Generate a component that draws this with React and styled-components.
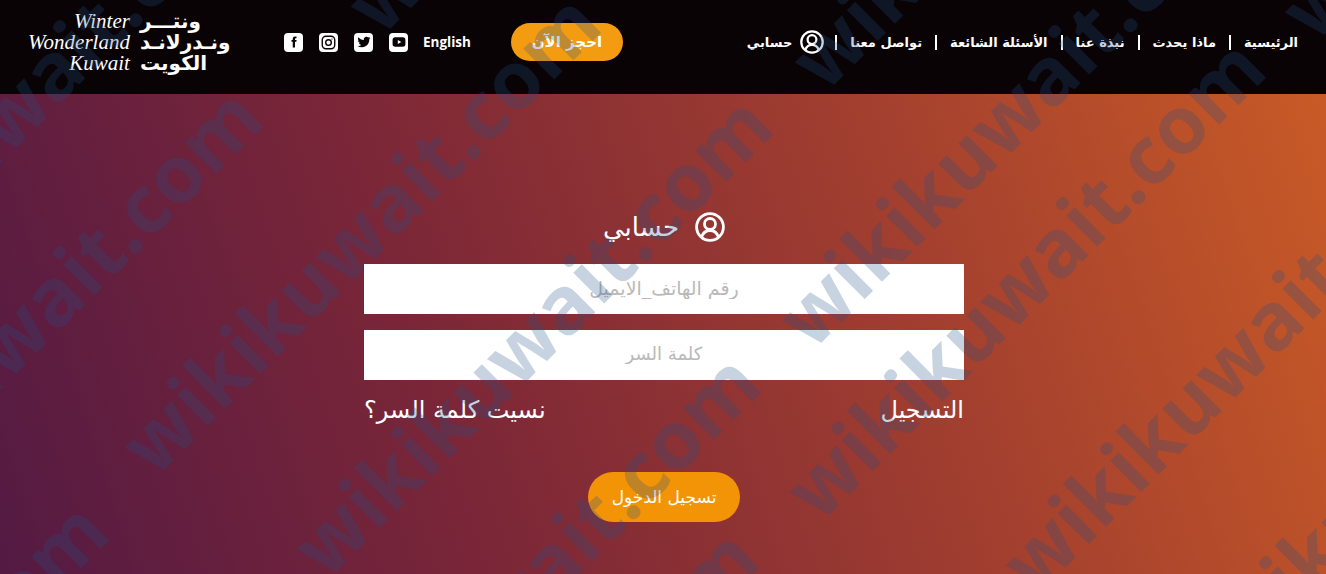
import React from 'react';
import styled, { createGlobalStyle } from 'styled-components';

const Global = createGlobalStyle`
  html, body { margin: 0; padding: 0; }
  body { font-family: "DejaVu Sans", "Noto Sans", sans-serif; }
`;

const Page = styled.div`
  position: relative;
  width: 1326px;
  height: 574px;
  overflow: hidden;
  background: linear-gradient(72deg, #541a43 0%, #7a2638 32%, #a13e2f 66%, #cb5c26 100%);
`;

const Header = styled.header`
  height: 94px;
  box-sizing: border-box;
  background: #0a0305;
  display: flex;
  align-items: center;
  padding: 0 28px 10px;
  justify-content: space-between;
`;

const LeftGroup = styled.div`
  display: flex;
  align-items: center;
`;

const Logo = styled.div`
  width: 202px;
  display: flex;
  align-items: center;
  gap: 5px;
  color: #fff;
`;

const LogoEn = styled.div`
  font-family: "Liberation Serif", serif;
  font-style: italic;
  font-size: 21px;
  line-height: 21px;
  text-align: right;
  width: 102px;
`;

const LogoBar = styled.div`
  width: 1px;
  height: 62px;
  background: #bbb;
`;

const LogoAr = styled.div`
  font-size: 20px;
  font-weight: 700;
  line-height: 21px;
  direction: rtl;
  text-align: left;
  white-space: nowrap;
`;

const Socials = styled.div`
  display: flex;
  gap: 16px;
  margin-left: 54px;
`;

const Social = styled.a`
  width: 19px;
  height: 19px;
  border-radius: 4px;
  background: #fff;
  display: flex;
  align-items: center;
  justify-content: center;
`;

const Lang = styled.a`
  font-family: "Open Sans", sans-serif;
  font-weight: 700;
  font-size: 13.5px;
  color: #fff;
  margin-left: 15px;
`;

const BookBtn = styled.a`
  width: 112px;
  height: 38px;
  border-radius: 19px;
  background: #f39c12;
  color: #fff;
  font-size: 15px;
  font-weight: 700;
  display: flex;
  align-items: center;
  justify-content: center;
  margin-left: 40px;
`;

const Nav = styled.nav`
  display: flex;
  direction: rtl;
  align-items: center;
  color: #fff;
  font-size: 13px;
  font-weight: 700;
`;

const NavItem = styled.a`
  padding: 0 13px;
  line-height: 15px;
  border-left: 2px solid #fff;
  &:first-child { padding-right: 0; }
  &:last-child {
    border-left: 0;
    padding: 0 11px 0 0;
    display: flex;
    align-items: center;
    gap: 8px;
  }
`;

const Main = styled.main`
  display: flex;
  flex-direction: column;
  align-items: center;
  padding: 116px 0 0 2px;
`;

const Title = styled.h1`
  margin: 0 0 20px;
  height: 34px;
  direction: rtl;
  display: flex;
  align-items: center;
  gap: 16px;
  color: #fff;
  font-size: 26px;
  font-weight: 400;
`;

const Form = styled.form`
  width: 600px;
  display: flex;
  flex-direction: column;
  gap: 16px;
`;

const Input = styled.input`
  height: 50px;
  box-sizing: border-box;
  border: 0;
  padding: 0 0 3px;
  background: #fff;
  text-align: center;
  direction: rtl;
  font-family: inherit;
  font-size: ${p => p.$size}px;
  outline: none;
  &::placeholder { color: #b9b9b9; opacity: 1; }
`;

const Links = styled.div`
  display: flex;
  justify-content: space-between;
  direction: rtl;
  color: #fff;
  font-size: 24px;
  line-height: 29px;
`;

const Submit = styled.button`
  width: 152px;
  height: 50px;
  margin-top: 31px;
  border: 0;
  border-radius: 25px;
  background: #f39406;
  color: #fff;
  font-family: inherit;
  font-size: 17px;
  align-self: center;
`;

const Watermarks = styled.div`
  position: absolute;
  inset: 0;
  pointer-events: none;
`;

const Mark = styled.span.attrs(p => ({ style: { left: p.$x - 22, top: p.$y + 12 } }))`
  position: absolute;
  font-family: "Open Sans", sans-serif;
  font-weight: 700;
  font-size: 80px;
  line-height: 1;
  margin-top: -40px;
  white-space: nowrap;
  color: rgba(30, 80, 135, 0.25);
  transform-origin: 0 50%;
  transform: rotate(-45deg);
`;

const UserIcon = ({ size }) => (
  <svg width={size} height={size} viewBox="0 0 30 30" fill="none" stroke="#fff" strokeWidth="2.8">
    <circle cx="15" cy="15" r="13.400" />
    <circle cx="15" cy="12" r="5.500" />
    <path d="M6.500 25c1.500-4.200 4.500-6.500 8.500-6.500s7 2.300 8.500 6.500" />
  </svg>
);

const navItems = ['الرئيسية', 'ماذا يحدث', 'نبذة عنا', 'الأسئلة الشائعة', 'تواصل معنا'];

// centre of the first "w" of each watermark, read off the reference
const marks = [
  [-183, 313],
  [-183, 539],
  [381, 4],
  [155, 445],
  [-337, 953],
  [327, 547],
  [825, 60],
  [315, 805],
  [812, 318],
  [820, 490],
  [313, 980],
  [1315, 10],
  [1036, 563],
  [1195, 677],
];

export default function App() {
  return (
    <Page>
      <Global />
      <Header>
        <LeftGroup>
          <Logo>
            <LogoEn>Winter<br />Wonderland<br />Kuwait</LogoEn>
            <LogoBar />
            <LogoAr>ونتـــر<br />ونـدرلانـد<br />الكويت</LogoAr>
          </Logo>
          <Socials>
            <Social>
              <svg width="12" height="12" viewBox="0 0 24 24" fill="#0a0305"><path d="M14 8V6c0-1 .5-1.500 1.500-1.500H17V1h-3c-3 0-4.500 2-4.500 4.500V8H7v3.500h2.500V23H14V11.500h2.700l.5-3.500z" /></svg>
            </Social>
            <Social>
              <svg width="15" height="15" viewBox="0 0 24 24" fill="none" stroke="#0a0305" strokeWidth="2.200"><rect x="2" y="2" width="20" height="20" rx="6" /><circle cx="12" cy="12" r="4.500" /><circle cx="17.500" cy="6.500" r="1" fill="#0a0305" stroke="none" /></svg>
            </Social>
            <Social>
              <svg width="14" height="14" viewBox="0 0 24 24" fill="#0a0305"><path d="M23 5c-.8.4-1.700.6-2.600.7 1-.6 1.700-1.500 2-2.500-.9.5-1.900.9-2.900 1.100a4.600 4.600 0 0 0-7.800 4.200C7.900 8.300 4.500 6.500 2.300 3.700c-1.200 2.100-.6 4.700 1.400 6-.7 0-1.400-.2-2-.6 0 2.200 1.500 4.100 3.700 4.600-.7.200-1.400.2-2.100.1.600 1.800 2.300 3.100 4.300 3.200A9.300 9.300 0 0 1 1 18.900 13 13 0 0 0 21.100 7.300C22 6.700 22.600 5.900 23 5z" /></svg>
            </Social>
            <Social>
              <svg width="14" height="14" viewBox="0 0 24 24"><rect x="1" y="4" width="22" height="16" rx="4.500" fill="#0a0305" /><path d="M10 8.500v7l6-3.500z" fill="#fff" /></svg>
            </Social>
          </Socials>
          <Lang>English</Lang>
          <BookBtn>احجز الآن</BookBtn>
        </LeftGroup>
        <Nav>
          {navItems.map(item => <NavItem key={item}>{item}</NavItem>)}
          <NavItem><UserIcon size={24} />حسابي</NavItem>
        </Nav>
      </Header>
      <Main>
        <Title><UserIcon size={30} />حسابي</Title>
        <Form>
          <Input $size={19} placeholder="رقم الهاتف_الايميل" />
          <Input $size={18} placeholder="كلمة السر" type="password" />
          <Links><a>التسجيل</a><a>نسيت كلمة السر؟</a></Links>
          <Submit type="button">تسجيل الدخول</Submit>
        </Form>
      </Main>
      <Watermarks>
        {marks.map(([x, y]) => <Mark key={`${x}-${y}`} $x={x} $y={y}>wikikuwait.com</Mark>)}
      </Watermarks>
    </Page>
  );
}
